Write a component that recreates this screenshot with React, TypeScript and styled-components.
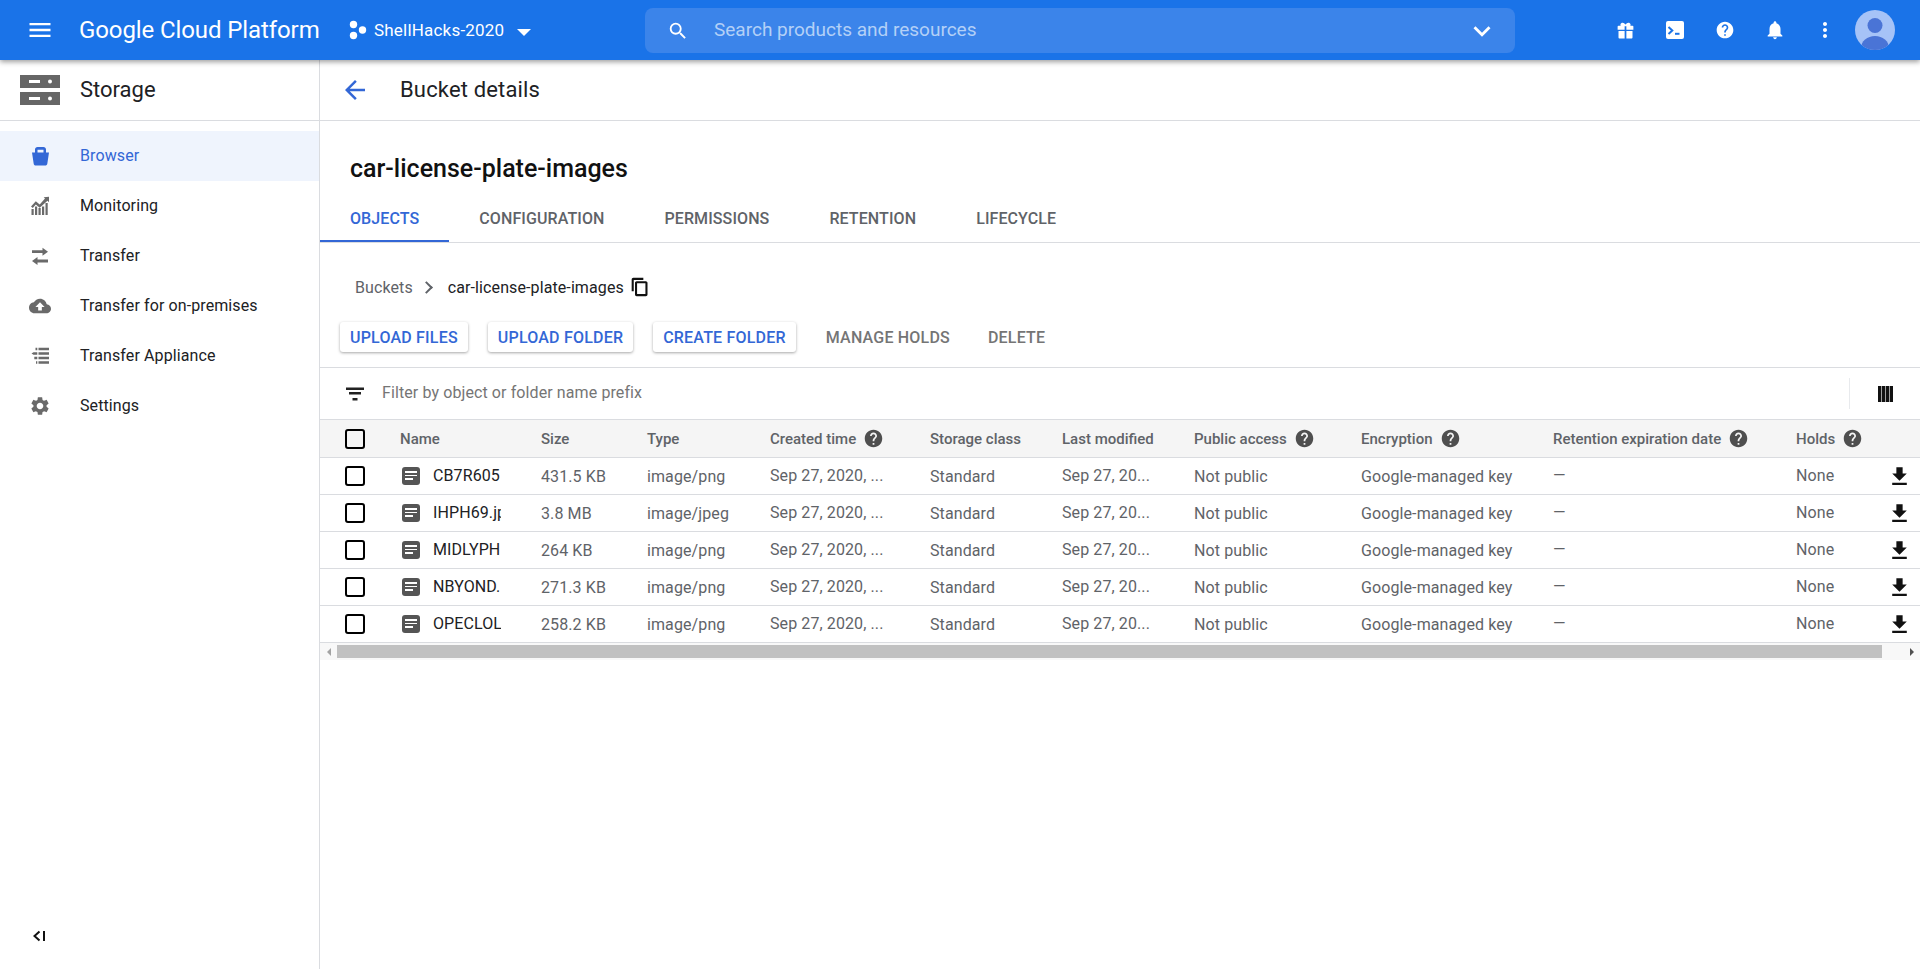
import React from "react";
import styled, { createGlobalStyle } from "styled-components";

const Global = createGlobalStyle`
  html, body { margin: 0; padding: 0; height: 100%; background: #fff; }
  body { font-family: Roboto, "Liberation Sans", sans-serif; overflow: hidden; }
  #root { height: 100%; }
  * { box-sizing: border-box; }
`;

const P = {
  menu: "M3 18h18v-2H3v2zm0-5h18v-2H3v2zm0-7v2h18V6H3z",
  search: "M15.5 14h-.79l-.28-.27A6.471 6.471 0 0 0 16 9.5 6.5 6.5 0 1 0 9.5 16c1.61 0 3.09-.59 4.23-1.57l.27.28v.79l5 4.99L20.49 19l-4.99-5zm-6 0C7.01 14 5 11.99 5 9.5S7.01 5 9.5 5 14 7.01 14 9.5 11.99 14 9.5 14z",
  expand: "M16.59 8.59L12 13.17 7.41 8.59 6 10l6 6 6-6z",
  back: "M20 11H7.83l5.59-5.59L12 4l-8 8 8 8 1.41-1.41L7.83 13H20v-2z",
  help: "M12 2C6.48 2 2 6.48 2 12s4.48 10 10 10 10-4.48 10-10S17.52 2 12 2zm1 17h-2v-2h2v2zm2.07-7.75l-.9.92C13.45 12.9 13 13.5 13 15h-2v-.5c0-1.1.45-2.1 1.17-2.83l1.24-1.26c.37-.36.59-.86.59-1.41 0-1.1-.9-2-2-2s-2 .9-2 2H8c0-2.21 1.79-4 4-4s4 1.79 4 4c0 .88-.36 1.68-.93 2.25z",
  bell: "M12 22c1.1 0 2-.9 2-2h-4c0 1.1.89 2 2 2zm6-6v-5c0-3.07-1.64-5.64-4.5-6.32V4c0-.83-.67-1.5-1.5-1.5s-1.5.67-1.5 1.5v.68C7.63 5.36 6 7.92 6 11v5l-2 2v1h16v-1l-2-2z",
  more: "M12 8c1.1 0 2-.9 2-2s-.9-2-2-2-2 .9-2 2 .9 2 2 2zm0 2c-1.1 0-2 .9-2 2s.9 2 2 2 2-.9 2-2-.9-2-2-2zm0 6c-1.1 0-2 .9-2 2s.9 2 2 2 2-.9 2-2-.9-2-2-2z",
  filter: "M9.500 18.500h5V16h-5v2.500zM3 5.500V8h18V5.500H3zm3 7h12V10H6v2.500z",
  download: "M19 9h-4V3H9v6H5l7 7 7-7zM5 18v2.200h14V18H5z",
  copy: "M16 1H4c-1.1 0-2 .9-2 2v14h2.500V3.500H16V1zM19 5H8c-1.1 0-2 .9-2 2v14c0 1.100.9 2 2 2h11c1.100 0 2-.9 2-2V7c0-1.100-.9-2-2-2zm-.5 15.500h-10v-13h10v13z",
  settings: "M19.14 12.94c.04-.3.06-.61.06-.94 0-.32-.02-.64-.07-.94l2.03-1.58c.18-.14.23-.41.12-.61l-1.92-3.32c-.12-.22-.37-.29-.59-.22l-2.39.96c-.5-.38-1.03-.7-1.62-.94l-.36-2.54c-.04-.24-.24-.41-.48-.41h-3.84c-.24 0-.43.17-.47.41l-.36 2.54c-.59.24-1.13.57-1.62.94l-2.39-.96c-.22-.08-.47 0-.59.22L2.74 8.87c-.12.21-.08.47.12.61l2.03 1.58c-.05.3-.09.63-.09.94s.02.64.07.94l-2.03 1.58c-.18.14-.23.41-.12.61l1.92 3.32c.12.22.37.29.59.22l2.39-.96c.5.38 1.03.7 1.62.94l.36 2.54c.05.24.24.41.48.41h3.84c.24 0 .44-.17.47-.41l.36-2.54c.59-.24 1.13-.56 1.62-.94l2.39.96c.22.08.47 0 .59-.22l1.92-3.32c.12-.22.07-.47-.12-.61l-2.01-1.58zM12 15.6c-1.98 0-3.6-1.62-3.6-3.6s1.62-3.6 3.6-3.6 3.6 1.62 3.6 3.6-1.62 3.6-3.6 3.6z",
  cloud: "M19.35 10.04C18.67 6.59 15.64 4 12 4 9.11 4 6.6 5.64 5.35 8.04 2.34 8.36 0 10.91 0 14c0 3.31 2.69 6 6 6h13c2.76 0 5-2.24 5-5 0-2.64-2.05-4.78-4.65-4.96zM14 13v4h-4v-4H7l5-5 5 5h-3z",
  swap: "M4 6.300h10.500V3.700L20 7.700l-5.500 4V9.100H4zM20 15.600H9.500V13L4 17l5.500 4v-2.600H20z",
  gift: "M20 6.500h-2.600c.3-.5.5-1 .4-1.500C17.600 3.600 16.400 3 15.300 3c-1.300 0-2.400 1-3.300 2.200C11.100 4 10 3 8.700 3c-1.100 0-2.300.6-2.500 2-.1.5.1 1 .4 1.500H4c-.6 0-1 .4-1 1V11h8V7h2v4h8V7.500c0-.6-.4-1-1-1zM4 12.500V20c0 .6.4 1 1 1h6v-8.500H4zm9 0V21h6c.6 0 1-.4 1-1v-7.500h-7z",
  bucket: "M4 8.500h17l-1.700 11.200c-.15 1-1 1.800-2 1.800H7.700c-1 0-1.850-.8-2-1.800zM7 8.500V5.500C7 4.100 8.100 3 9.500 3h6C16.900 3 18 4.100 18 5.500v3h-2.500V5.700h-6v2.800z",
  monitoring: "M3.500 21v-6h2.200v6zM7 21v-8.500h2.200V21zM10.500 21v-7h2.200v7zM14 21v-8.500h2.200V21zM17.500 21V9h2.200v12zM3 12.500l4.800-5.300 3.900 3.300L17 4.500l-1.300-1.300L21 2.800v5.500l-1.500-1.600-7.800 7.100-3.900-3.400-3 3.600z",
  appliance: "M7.500 3.800h1.800v2.500H7.500zM10.500 3.800H21v2.500H10.500zM3.500 9.500l2-1.300h3.800v2.500H5.500zM10.500 8.200H21v2.500H10.500zM6.300 12.700h3v2.500h-3zM10.500 12.700H21v2.500H10.500zM8 17.200h1.300v2.500H8zM10.500 17.200H21v2.500H10.500z",
};

const Ico = styled.svg<{ $s?: number; $c?: string }>`
  width: ${(p) => p.$s ?? 24}px;
  height: ${(p) => p.$s ?? 24}px;
  fill: ${(p) => p.$c ?? "currentColor"};
  flex: none;
  display: block;
`;

const Icon = ({ d, s, c }: { d: string; s?: number; c?: string }) => (
  <Ico viewBox="0 0 24 24" $s={s} $c={c}>
    <path d={d} />
  </Ico>
);

const Page = styled.div`
  height: 969px;
  width: 1920px;
  display: flex;
  flex-direction: column;
`;

const TopBar = styled.header`
  height: 60px;
  flex: none;
  background: #1a73e8;
  color: #fff;
  display: flex;
  align-items: center;
  position: relative;
  z-index: 2;
  box-shadow: 0 2px 5px rgba(0, 0, 0, 0.38);
`;
const MenuSlot = styled.div`
  width: 79px;
  display: flex;
  justify-content: center;
  flex: none;
`;
const Brand = styled.div`
  font-size: 24px;
  letter-spacing: -0.1px;
  width: 270px;
  flex: none;
  white-space: nowrap;
`;
const Project = styled.div`
  display: flex;
  align-items: center;
  font-size: 17px;
  letter-spacing: 0.2px;
  width: 296px;
  flex: none;
`;
const ProjectName = styled.span`
  margin-left: 5px;
  width: 131px;
  white-space: nowrap;
`;
const Caret = styled.span`
  margin-left: 12px;
  width: 0;
  height: 0;
  margin-top: 5px;
  border-left: 7px solid transparent;
  border-right: 7px solid transparent;
  border-top: 7px solid #fff;
`;
const Search = styled.div`
  width: 870px;
  height: 45px;
  flex: none;
  margin-top: 1px;
  background: #3b84ea;
  border-radius: 8px;
  display: flex;
  align-items: center;
  padding: 0 16px 0 22px;
`;
const SearchText = styled.span`
  margin: 0 0 3px 25px;
  flex: 1;
  font-size: 19px;
  color: #b3d0f7;
`;
const Actions = styled.div`
  margin-left: 85px;
  display: flex;
  align-items: center;
`;
const ActionSlot = styled.div`
  width: 50px;
  display: flex;
  justify-content: center;
`;
const Avatar = styled.div`
  width: 40px;
  height: 40px;
  margin-left: 5px;
  border-radius: 50%;
  overflow: hidden;
  flex: none;
`;

const Body = styled.div`
  flex: 1;
  display: flex;
  min-height: 0;
`;
const Side = styled.aside`
  width: 320px;
  flex: none;
  border-right: 1px solid #dadce0;
  display: flex;
  flex-direction: column;
`;
const SideHead = styled.div`
  height: 61px;
  flex: none;
  display: flex;
  align-items: center;
  padding-left: 20px;
  border-bottom: 1px solid #dadce0;
  font-size: 22px;
  color: #202124;
`;
const SideTitle = styled.span`
  margin: 0 0 1px 20px;
`;
const Nav = styled.nav`
  margin-top: 10px;
  display: flex;
  flex-direction: column;
`;
const NavItem = styled.div<{ $active?: boolean }>`
  height: 50px;
  display: flex;
  align-items: center;
  font-size: 16px;
  letter-spacing: 0.1px;
  color: ${(p) => (p.$active ? "#3367d6" : "#202124")};
  background: ${(p) => (p.$active ? "#eff4fd" : "transparent")};
`;
const NavIconSlot = styled.span<{ $active?: boolean }>`
  width: 80px;
  display: flex;
  justify-content: center;
  color: ${(p) => (p.$active ? "#3367d6" : "#6a6a6a")};
`;
const NavLabel = styled.span`
  margin-bottom: 2px;
`;
const Collapse = styled.div`
  margin-top: auto;
  height: 64px;
  padding: 0 0 2px 32px;
  display: flex;
  align-items: center;
`;

const Main = styled.main`
  flex: 1;
  min-width: 0;
  display: flex;
  flex-direction: column;
`;
const PageHead = styled.div`
  height: 61px;
  flex: none;
  display: flex;
  align-items: center;
  padding-left: 20px;
  border-bottom: 1px solid #dadce0;
  font-size: 22px;
  color: #202124;
`;
const PageTitle = styled.span`
  margin: 0 0 1px 30px;
  letter-spacing: 0.15px;
`;
const BucketName = styled.h1`
  margin: 33px 0 0 30px;
  height: 32px;
  line-height: 30px;
  font-size: 25px;
  font-weight: 500;
  color: #111;
`;
const Tabs = styled.div`
  margin-top: 12px;
  height: 45px;
  flex: none;
  display: flex;
  border-bottom: 1px solid #dadce0;
`;
const Tab = styled.div<{ $active?: boolean }>`
  padding: 0 30px 2px;
  height: 44px;
  display: flex;
  align-items: center;
  font-size: 16px;
  font-weight: 500;
  letter-spacing: 0.1px;
  color: ${(p) => (p.$active ? "#3367d6" : "#5f6368")};
  border-bottom: 2px solid ${(p) => (p.$active ? "#3367d6" : "transparent")};
`;
const Crumbs = styled.div`
  margin-top: 30px;
  height: 28px;
  padding-left: 35px;
  display: flex;
  align-items: center;
  font-size: 16px;
  letter-spacing: 0.1px;
  color: #202124;
`;
const CrumbRoot = styled.span`
  color: #5f6368;
`;
const Chevron = styled.span`
  width: 9px;
  height: 9px;
  margin: 0 17px 0 9px;
  border-top: 2.5px solid #5f6368;
  border-right: 2.5px solid #5f6368;
  transform: rotate(45deg);
`;
const CopySlot = styled.span`
  margin-left: 6px;
  display: flex;
`;
const ActionBar = styled.div`
  margin-top: 21px;
  display: flex;
  align-items: center;
  padding: 0 0 15px 20px;
  border-bottom: 1px solid #dadce0;
`;
const RaisedBtn = styled.div`
  height: 30px;
  padding: 0 10px;
  margin-right: 20px;
  display: flex;
  align-items: center;
  font-size: 16px;
  font-weight: 500;
  letter-spacing: 0.2px;
  color: #3367d6;
  border-radius: 3px;
  box-shadow: 0 1px 3px rgba(0, 0, 0, 0.35);
`;
const FlatBtn = styled.div`
  margin: 0 28px 0 10px;
  font-size: 16px;
  font-weight: 500;
  letter-spacing: 0.2px;
  color: #757575;
`;
const FilterBar = styled.div`
  height: 51px;
  flex: none;
  display: flex;
  align-items: center;
  padding-left: 23px;
`;
const FilterText = styled.span`
  margin: 0 0 2px 15px;
  flex: 1;
  font-size: 16px;
  letter-spacing: 0.1px;
  color: #757575;
`;
const ColsBtn = styled.div`
  width: 70px;
  height: 31px;
  flex: none;
  border-left: 1px solid #e8eaed;
  display: flex;
  align-items: center;
  padding-left: 28px;
  margin-right: 1px;
`;

const COLS = "80px 141px 106px 123px 160px 132px 132px 167px 192px 243px 91px 32px";
const HeadRow = styled.div`
  display: grid;
  grid-template-columns: ${COLS};
  height: 39px;
  background: #f5f5f5;
  border-top: 1px solid #dadce0;
  border-bottom: 1px solid #dadce0;
  align-items: center;
  font-size: 15px;
  font-weight: 500;
  color: #5f6368;
`;
const Row = styled.div`
  display: grid;
  grid-template-columns: ${COLS};
  height: 37px;
  border-bottom: 1px solid #dadce0;
  align-items: center;
  font-size: 16px;
  letter-spacing: 0.1px;
  color: #5f6368;
`;
const HeadCell = styled.div`
  display: flex;
  align-items: center;
  gap: 7px;
  white-space: nowrap;
`;
const Cell = styled.div<{ $lift?: boolean }>`
  white-space: nowrap;
  overflow: hidden;
  padding-bottom: ${(p) => (p.$lift ? 2 : 0)}px;
`;
const NameCell = styled.div`
  display: flex;
  align-items: center;
  color: #202124;
  padding-left: 2px;
`;
const FileName = styled.span`
  margin: 0 0 2px 13px;
  width: 68px;
  overflow: hidden;
  white-space: nowrap;
`;
const CheckCell = styled.div`
  padding-left: 25px;
  display: flex;
`;
const Check = styled.span`
  width: 20px;
  height: 20px;
  border: 2px solid #000;
  border-radius: 3px;
  display: block;
`;
const DownloadCell = styled.div`
  color: #111;
  display: flex;
`;
const FileIcon = styled.span`
  width: 18px;
  height: 18px;
  border-radius: 3px;
  background: #555;
  flex: none;
  padding: 4px 3px;
  display: flex;
  flex-direction: column;
  gap: 2px;
`;
const FileLine = styled.i<{ $w: number }>`
  display: block;
  height: 1.5px;
  background: #fff;
  width: ${(p) => p.$w}px;
`;
const ScrollBar = styled.div`
  height: 17px;
  display: flex;
  align-items: center;
  background: #f8f8f8;
`;
const ScrollArrow = styled.span<{ $right?: boolean }>`
  width: 17px;
  flex: none;
  display: flex;
  justify-content: center;
  &::before {
    content: "";
    border-top: 4px solid transparent;
    border-bottom: 4px solid transparent;
    ${(p) => (p.$right ? "border-left: 4px solid #505050;" : "border-right: 4px solid #a3a3a3;")}
  }
`;
const ScrollThumb = styled.div`
  flex: 1;
  height: 13px;
  background: #c1c1c1;
`;
const ScrollEnd = styled.span`
  width: 21px;
  flex: none;
`;

const Help = () => <Icon d={P.help} s={21} c="#4f4f4f" />;

const nav = [
  { t: "Browser", d: P.bucket, active: true, s: 24 },
  { t: "Monitoring", d: P.monitoring, s: 24 },
  { t: "Transfer", d: P.swap, s: 24 },
  { t: "Transfer for on-premises", d: P.cloud, s: 22 },
  { t: "Transfer Appliance", d: P.appliance, s: 24 },
  { t: "Settings", d: P.settings, s: 22 },
];

const rows = [
  ["CB7R605", "431.5 KB", "image/png"],
  ["IHPH69.jpg", "3.8 MB", "image/jpeg"],
  ["MIDLYPH", "264 KB", "image/png"],
  ["NBYOND.", "271.3 KB", "image/png"],
  ["OPECLOL", "258.2 KB", "image/png"],
];

export default function App() {
  return (
    <Page>
      <Global />
      <TopBar>
        <MenuSlot>
          <Icon d={P.menu} s={28} />
        </MenuSlot>
        <Brand>Google Cloud Platform</Brand>
        <Project>
          <svg width="20" height="20" viewBox="0 0 20 20" fill="#fff">
            <circle cx="4.500" cy="4.500" r="3.700" />
            <circle cx="4.500" cy="15.500" r="3.700" />
            <circle cx="13.500" cy="10" r="3.700" />
          </svg>
          <ProjectName>ShellHacks-2020</ProjectName>
          <Caret />
        </Project>
        <Search>
          <Icon d={P.search} s={22} />
          <SearchText>Search products and resources</SearchText>
          <Icon d={P.expand} s={34} />
        </Search>
        <Actions>
          <ActionSlot>
            <Icon d={P.gift} s={21} />
          </ActionSlot>
          <ActionSlot>
            <svg width="20" height="20" viewBox="0 0 20 20">
              <rect width="18" height="18" x="1" y="1" rx="2" fill="#fff" />
              <path d="M3.500 7l3.800 3.500L3.500 14" fill="none" stroke="#1a73e8" strokeWidth="2" />
              <path d="M10 13.800h4.500" stroke="#1a73e8" strokeWidth="2" />
            </svg>
          </ActionSlot>
          <ActionSlot>
            <Icon d={P.help} s={20} />
          </ActionSlot>
          <ActionSlot>
            <Icon d={P.bell} s={22} />
          </ActionSlot>
          <ActionSlot>
            <Icon d={P.more} s={24} />
          </ActionSlot>
          <Avatar>
            <svg width="40" height="40" viewBox="0 0 40 40">
              <rect width="40" height="40" fill="#a6c3f7" />
              <circle cx="20" cy="15.500" r="7.500" fill="#4a74d6" />
              <ellipse cx="20" cy="38" rx="14" ry="12" fill="#4a74d6" />
            </svg>
          </Avatar>
        </Actions>
      </TopBar>
      <Body>
        <Side>
          <SideHead>
            <svg width="40" height="30" viewBox="0 0 40 30">
              <path d="M0 0h40v13H0zM0 17h40v13H0z" fill="#666" />
              <path d="M9 5h11v3H9zM9 22h11v3H9z" fill="#fff" />
              <circle cx="30" cy="6.500" r="2" fill="#fff" />
              <circle cx="30" cy="23.500" r="2" fill="#fff" />
            </svg>
            <SideTitle>Storage</SideTitle>
          </SideHead>
          <Nav>
            {nav.map((n) => (
              <NavItem key={n.t} $active={n.active}>
                <NavIconSlot $active={n.active}>
                  <Icon d={n.d} s={n.s} />
                </NavIconSlot>
                <NavLabel>{n.t}</NavLabel>
              </NavItem>
            ))}
          </Nav>
          <Collapse>
            <svg width="14" height="14" viewBox="0 0 14 14" fill="none" stroke="#111" strokeWidth="2">
              <path d="M7.500 2.500L2.500 7l5 4.500" />
              <path d="M12 2v10" />
            </svg>
          </Collapse>
        </Side>
        <Main>
          <PageHead>
            <Icon d={P.back} s={30} c="#3367d6" />
            <PageTitle>Bucket details</PageTitle>
          </PageHead>
          <BucketName>car-license-plate-images</BucketName>
          <Tabs>
            <Tab $active>OBJECTS</Tab>
            <Tab>CONFIGURATION</Tab>
            <Tab>PERMISSIONS</Tab>
            <Tab>RETENTION</Tab>
            <Tab>LIFECYCLE</Tab>
          </Tabs>
          <Crumbs>
            <CrumbRoot>Buckets</CrumbRoot>
            <Chevron />
            car-license-plate-images
            <CopySlot>
              <Icon d={P.copy} s={20} c="#111" />
            </CopySlot>
          </Crumbs>
          <ActionBar>
            <RaisedBtn>UPLOAD FILES</RaisedBtn>
            <RaisedBtn>UPLOAD FOLDER</RaisedBtn>
            <RaisedBtn>CREATE FOLDER</RaisedBtn>
            <FlatBtn>MANAGE HOLDS</FlatBtn>
            <FlatBtn>DELETE</FlatBtn>
          </ActionBar>
          <FilterBar>
            <Icon d={P.filter} s={24} c="#222" />
            <FilterText>Filter by object or folder name prefix</FilterText>
            <ColsBtn>
              <svg width="15" height="16" viewBox="0 0 15 16" fill="#111">
                <path d="M0 0h3.300v16H0zM3.900 0h3.300v16H3.900zM7.800 0h3.300v16H7.800zM11.700 0H15v16h-3.300z" />
              </svg>
            </ColsBtn>
          </FilterBar>
          <HeadRow>
            <CheckCell>
              <Check />
            </CheckCell>
            <HeadCell>Name</HeadCell>
            <HeadCell>Size</HeadCell>
            <HeadCell>Type</HeadCell>
            <HeadCell>
              Created time <Help />
            </HeadCell>
            <HeadCell>Storage class</HeadCell>
            <HeadCell>Last modified</HeadCell>
            <HeadCell>
              Public access <Help />
            </HeadCell>
            <HeadCell>
              Encryption <Help />
            </HeadCell>
            <HeadCell>
              Retention expiration date <Help />
            </HeadCell>
            <HeadCell>
              Holds <Help />
            </HeadCell>
            <div />
          </HeadRow>
          {rows.map((r) => (
            <Row key={r[0]}>
              <CheckCell>
                <Check />
              </CheckCell>
              <NameCell>
                <FileIcon>
                  <FileLine $w={12} />
                  <FileLine $w={12} />
                  <FileLine $w={8} />
                </FileIcon>
                <FileName>{r[0]}</FileName>
              </NameCell>
              <Cell>{r[1]}</Cell>
              <Cell>{r[2]}</Cell>
              <Cell $lift>Sep 27, 2020, ...</Cell>
              <Cell>Standard</Cell>
              <Cell $lift>Sep 27, 20...</Cell>
              <Cell>Not public</Cell>
              <Cell>Google-managed key</Cell>
              <Cell $lift>—</Cell>
              <Cell $lift>None</Cell>
              <DownloadCell>
                <Icon d={P.download} s={25} />
              </DownloadCell>
            </Row>
          ))}
          <ScrollBar>
            <ScrollArrow />
            <ScrollThumb />
            <ScrollEnd />
            <ScrollArrow $right />
          </ScrollBar>
        </Main>
      </Body>
    </Page>
  );
}
